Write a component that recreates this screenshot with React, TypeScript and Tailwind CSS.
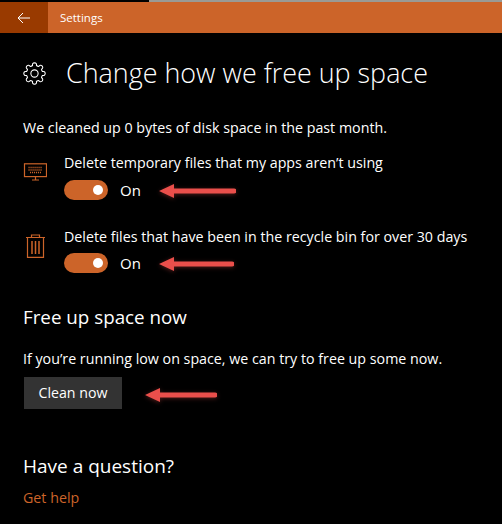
function gearPath() {
  const cx = 12, cy = 12, lobes = 8, rOut = 11.2, rIn = 8.6;
  const pts: string[] = [];
  for (let i = 0; i < lobes; i++) {
    const a = (i / lobes) * Math.PI * 2;
    const step = (Math.PI * 2) / lobes;
    const p = (r: number, t: number) => `${(cx + r * Math.cos(t)).toFixed(2)} ${(cy + r * Math.sin(t)).toFixed(2)}`;
    pts.push(`${i === 0 ? "M" : "L"}${p(rIn, a - step * 0.3)}`);
    pts.push(`Q${p(rOut, a - step * 0.3)} ${p(rOut, a)}`);
    pts.push(`Q${p(rOut, a + step * 0.3)} ${p(rIn, a + step * 0.3)}`);
    pts.push(`Q${p(rIn - 0.6, a + step * 0.5)} ${p(rIn, a + step * 0.7)}`);
  }
  return pts.join(" ") + "Z";
}
function Toggle() {
  return (
    <div className="flex items-center gap-3">
      <div className="flex h-5 w-11 items-center justify-end rounded-full bg-[#cc6429] pr-[5px]">
        <div className="h-2.5 w-2.5 rounded-full bg-white" />
      </div>
      <span className="text-[15px] leading-5 text-white">On</span>
    </div>
  );
}
function Arrow({ left, top, width }: { left: number; top: number; width: number }) {
  return (
    <svg className="absolute drop-shadow-[0_1px_2px_rgba(234,79,75,0.35)]" style={{ left, top }} width={width} height={16} viewBox={`0 0 ${width} 16`}>
      <path d={`M0 8 L15 1 L15 5.500 L${width - 2} 5.500 A2.500 2.500 0 0 1 ${width - 2} 10.500 L15 10.500 L15 15 Z`} fill="#ea4f4b" />
    </svg>
  );
}
export default function App() {
  return (
    <div className="relative h-[524px] w-[502px] overflow-hidden bg-black font-['Open_Sans','Liberation_Sans',sans-serif] text-white">
      <div className="flex h-0.5 w-full">
        <div className="w-[149px] bg-black" />
        <div className="flex-1 bg-[#9a9a94]" />
      </div>
      <header className="flex h-[31px] items-center bg-[#cc6429]">
        <div className="flex h-full w-12 items-center justify-center bg-[#993a00]">
          <svg width="14" height="12" viewBox="0 0 14 12" fill="none" stroke="white" strokeWidth="1">
            <path d="M13 6H1M6 1L1 6l5 5" />
          </svg>
        </div>
        <span className="ml-3 text-[11.5px] text-white">Settings</span>
      </header>
      <main className="px-[23px]">
        <div className="mt-[18px] flex h-[44px] items-center gap-[20px]">
          <svg width="23" height="23" viewBox="0 0 24 24" fill="none" stroke="white" strokeWidth="1.1" strokeLinejoin="round">
            <path d={gearPath()} />
            <circle cx="12" cy="12" r="3.800" />
          </svg>
          <h1 className="text-[26.9px] font-light leading-[44px]">Change how we free up space</h1>
        </div>
        <p className="mt-[23px] text-[14.25px] leading-5">We cleaned up 0 bytes of disk space in the past month.</p>
        <div className="mt-[15px] flex gap-[17px]">
          <svg className="mt-[10px] h-[18px] w-6 shrink-0" viewBox="0 0 24 18" fill="none" stroke="#cc6429" strokeWidth="1.2">
            <rect x="1.500" y="0.800" width="22" height="12.800" />
            <path d="M12.500 13.600v3.400M9 17h7" />
            <path d="M5.500 4.500h14M5.500 7h14M7 9.500h11" strokeWidth="1.300" strokeDasharray="1.100 0.900" />
          </svg>
          <div className="flex flex-col gap-[7px]">
            <div className="text-[14.25px] leading-5">Delete temporary files that my apps aren’t using</div>
            <Toggle />
          </div>
        </div>
        <div className="mt-[27px] flex gap-[17px]">
          <svg className="mt-[7px] h-6 w-6 shrink-0" viewBox="0 0 24 24" fill="none" stroke="#cc6429" strokeWidth="1.200">
            <path d="M3 3.500h19M8.500 3.500V1h8v2.500M4.500 3.500V23.300h16V3.500" />
            <path d="M9 7v13M12.500 7v13M16 7v13" strokeWidth="1.500" />
          </svg>
          <div className="flex flex-col gap-[6px]">
            <div className="text-[14.25px] leading-5">Delete files that have been in the recycle bin for over 30 days</div>
            <Toggle />
          </div>
        </div>
        <h2 className="mt-[30px] text-[18.8px] leading-7">Free up space now</h2>
        <p className="mt-[18px] text-[14.25px] leading-5">If you’re running low on space, we can try to free up some now.</p>
        <button className="mt-[8px] ml-px block h-8 w-[98px] bg-[#333333] text-[14.2px] text-white">Clean now</button>
        <h2 className="mt-[43px] text-[19px] leading-7">Have a question?</h2>
        <a className="mt-[8px] block text-[14.25px] leading-5 text-[#cc6429]">Get help</a>
      </main>
      <Arrow left={159} top={183} width={77} />
      <Arrow left={159} top={256} width={75} />
      <Arrow left={145} top={387} width={72} />
    </div>
  );
}
